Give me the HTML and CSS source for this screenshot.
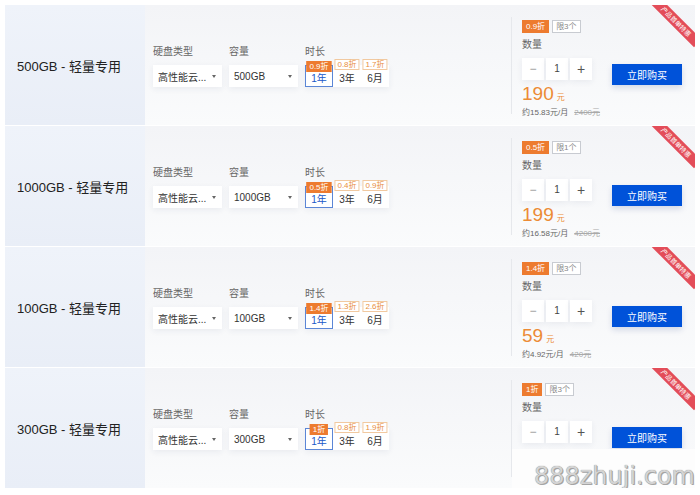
FILE: index.html
```html
<!DOCTYPE html>
<html lang="zh-CN">
<head>
    <meta charset="UTF-8">
    <meta name="viewport" content="width=device-width, initial-scale=1.0">
    <title>轻量专用云硬盘</title>
    <link rel="stylesheet" href="styles.css">
</head>
<body>
    <main class="list">

        <div class="item">
            <div class="name">500GB - 轻量专用</div>
            <div class="body">
                <div class="config">
                    <div class="field">
                        <div class="label">硬盘类型</div>
                        <div class="select"><span>高性能云...</span><i class="arrow"></i></div>
                    </div>
                    <div class="field">
                        <div class="label">容量</div>
                        <div class="select"><span>500GB</span><i class="arrow"></i></div>
                    </div>
                    <div class="field">
                        <div class="label">时长</div>
                        <div class="periods">
                            <div class="period active"><em class="off hot">0.9折</em>1年</div>
                            <div class="period"><em class="off">0.8折</em>3年</div>
                            <div class="period"><em class="off">1.7折</em>6月</div>
                        </div>
                    </div>
                </div>
                <div class="buy">
                    <div class="order">
                        <div class="tags"><span class="tag hot">0.9折</span><span class="tag limit">限3个</span></div>
                        <div class="label">数量</div>
                        <div class="stepper"><span class="minus">−</span><span>1</span><span class="plus">+</span></div>
                        <div class="price">190<small>元</small></div>
                        <div class="monthly">约15.83元/月<s>2400元</s></div>
                    </div>
                    <button class="buy-btn">立即购买</button>
                </div>
                <div class="ribbon">产品首单特惠</div>
            </div>
        </div>

        <div class="item">
            <div class="name">1000GB - 轻量专用</div>
            <div class="body">
                <div class="config">
                    <div class="field">
                        <div class="label">硬盘类型</div>
                        <div class="select"><span>高性能云...</span><i class="arrow"></i></div>
                    </div>
                    <div class="field">
                        <div class="label">容量</div>
                        <div class="select"><span>1000GB</span><i class="arrow"></i></div>
                    </div>
                    <div class="field">
                        <div class="label">时长</div>
                        <div class="periods">
                            <div class="period active"><em class="off hot">0.5折</em>1年</div>
                            <div class="period"><em class="off">0.4折</em>3年</div>
                            <div class="period"><em class="off">0.9折</em>6月</div>
                        </div>
                    </div>
                </div>
                <div class="buy">
                    <div class="order">
                        <div class="tags"><span class="tag hot">0.5折</span><span class="tag limit">限1个</span></div>
                        <div class="label">数量</div>
                        <div class="stepper"><span class="minus">−</span><span>1</span><span class="plus">+</span></div>
                        <div class="price">199<small>元</small></div>
                        <div class="monthly">约16.58元/月<s>4200元</s></div>
                    </div>
                    <button class="buy-btn">立即购买</button>
                </div>
                <div class="ribbon">产品首单特惠</div>
            </div>
        </div>

        <div class="item">
            <div class="name">100GB - 轻量专用</div>
            <div class="body">
                <div class="config">
                    <div class="field">
                        <div class="label">硬盘类型</div>
                        <div class="select"><span>高性能云...</span><i class="arrow"></i></div>
                    </div>
                    <div class="field">
                        <div class="label">容量</div>
                        <div class="select"><span>100GB</span><i class="arrow"></i></div>
                    </div>
                    <div class="field">
                        <div class="label">时长</div>
                        <div class="periods">
                            <div class="period active"><em class="off hot">1.4折</em>1年</div>
                            <div class="period"><em class="off">1.3折</em>3年</div>
                            <div class="period"><em class="off">2.6折</em>6月</div>
                        </div>
                    </div>
                </div>
                <div class="buy">
                    <div class="order">
                        <div class="tags"><span class="tag hot">1.4折</span><span class="tag limit">限3个</span></div>
                        <div class="label">数量</div>
                        <div class="stepper"><span class="minus">−</span><span>1</span><span class="plus">+</span></div>
                        <div class="price">59<small>元</small></div>
                        <div class="monthly">约4.92元/月<s>420元</s></div>
                    </div>
                    <button class="buy-btn">立即购买</button>
                </div>
                <div class="ribbon">产品首单特惠</div>
            </div>
        </div>

        <div class="item">
            <div class="name">300GB - 轻量专用</div>
            <div class="body">
                <div class="config">
                    <div class="field">
                        <div class="label">硬盘类型</div>
                        <div class="select"><span>高性能云...</span><i class="arrow"></i></div>
                    </div>
                    <div class="field">
                        <div class="label">容量</div>
                        <div class="select"><span>300GB</span><i class="arrow"></i></div>
                    </div>
                    <div class="field">
                        <div class="label">时长</div>
                        <div class="periods">
                            <div class="period active"><em class="off hot">1折</em>1年</div>
                            <div class="period"><em class="off">0.8折</em>3年</div>
                            <div class="period"><em class="off">1.9折</em>6月</div>
                        </div>
                    </div>
                </div>
                <div class="buy">
                    <div class="order">
                        <div class="tags"><span class="tag hot">1折</span><span class="tag limit">限3个</span></div>
                        <div class="label">数量</div>
                        <div class="stepper"><span class="minus">−</span><span>1</span><span class="plus">+</span></div>
                    </div>
                    <button class="buy-btn">立即购买</button>
                </div>
                <div class="ribbon">产品首单特惠</div>
            </div>
        </div>

        <div class="watermark">888zhuji.com</div>
    </main>
</body>
</html>
```

FILE: styles.css
```css
body {
    margin: 0;
    background: #fff;
    font-family: "Liberation Sans", "Noto Sans CJK SC", sans-serif;
    color: #333;
}

.list {
    position: relative;
    padding: 5px 5px 0;
    display: flex;
    flex-direction: column;
    gap: 1px;
}

.item {
    display: flex;
    height: 120px;
}

.name {
    width: 128px;
    padding-left: 12px;
    display: flex;
    align-items: center;
    font-size: 13px;
    color: #222;
    background: linear-gradient(#eff3fa, #e9eef7);
}

.body {
    position: relative;
    flex: 1;
    display: flex;
    align-items: center;
    padding-left: 8px;
    overflow: hidden;
    background: linear-gradient(#f3f4f7, #fafbfc);
}

.config {
    display: flex;
    gap: 7px;
    margin-top: 3px;
}

.field .label,
.order .label {
    font-size: 10px;
    line-height: 12px;
    color: #666;
    margin-bottom: 7px;
}

.select {
    width: 69px;
    height: 22px;
    box-sizing: border-box;
    padding: 0 6px 0 5px;
    display: flex;
    align-items: center;
    justify-content: space-between;
    background: #fff;
    font-size: 10px;
    color: #333;
    box-shadow: 0 2px 6px rgba(40, 60, 100, 0.07);
}

.arrow {
    width: 0;
    height: 0;
    border-left: 2.5px solid transparent;
    border-right: 2.5px solid transparent;
    border-top: 3px solid #666;
}

.periods {
    display: flex;
    background: #fff;
    box-shadow: 0 2px 6px rgba(40, 60, 100, 0.07);
}

.period {
    position: relative;
    width: 28px;
    height: 22px;
    box-sizing: border-box;
    display: flex;
    align-items: center;
    justify-content: center;
    padding-top: 2px;
    font-size: 10px;
    color: #333;
}

.period.active {
    border: 1px solid #5b86d6;
    color: #2057c7;
}

.off {
    position: absolute;
    top: -6px;
    left: 50%;
    transform: translateX(-50%);
    padding: 0 2px;
    font-style: normal;
    font-size: 8px;
    line-height: 9px;
    white-space: nowrap;
    color: #e8903f;
    background: #fff;
    border: 1px solid #f1c9a0;
}

.period.active .off {
    top: -5px;
}

.off.hot,
.tag.hot {
    color: #fff;
    background: #ed7b2f;
    border-color: #ed7b2f;
}

.buy {
    margin-left: auto;
    height: 97px;
    display: flex;
    border-left: 1px solid #e6e8ec;
    padding: 0 13px 0 10px;
}

.order {
    width: 70px;
    padding-top: 3px;
}

.tags {
    display: flex;
    gap: 3px;
    margin-bottom: 6px;
}

.tag {
    height: 13px;
    box-sizing: border-box;
    padding: 0 3px;
    font-size: 8px;
    line-height: 11px;
    border: 1px solid #c8cbd1;
    color: #888;
    background: #fff;
}

.stepper {
    display: flex;
    gap: 2px;
}

.stepper span {
    width: 22px;
    height: 22px;
    display: flex;
    align-items: center;
    justify-content: center;
    background: #fff;
    font-size: 10px;
    color: #444;
    box-shadow: 0 2px 6px rgba(40, 60, 100, 0.07);
}

.stepper .minus {
    color: #999;
    font-size: 12px;
}

.stepper .plus {
    font-size: 14px;
    color: #555;
}

.price {
    margin-top: 4px;
    font-size: 19px;
    line-height: 20px;
    color: #ec8b35;
}

.price small {
    font-size: 8px;
    margin-left: 3px;
}

.monthly {
    font-size: 8px;
    line-height: 10px;
    color: #666;
    white-space: nowrap;
}

.monthly s {
    margin-left: 6px;
    color: #aaa;
}

.buy-btn {
    align-self: center;
    margin: 19px 0 0 20px;
    width: 70px;
    height: 21px;
    padding: 0;
    border: none;
    background: #0052d9;
    color: #fff;
    font-family: inherit;
    font-size: 10px;
    box-shadow: 0 3px 6px rgba(0, 40, 120, 0.15);
}

.ribbon {
    position: absolute;
    top: 11px;
    right: -12px;
    width: 62px;
    height: 11px;
    transform: rotate(45deg);
    background: #e34d59;
    color: #fff;
    font-size: 6.5px;
    line-height: 11px;
    text-align: center;
    white-space: nowrap;
}

.watermark {
    position: absolute;
    left: 512px;
    top: 449px;
    width: 183px;
    height: 41px;
    box-sizing: border-box;
    padding: 14px 0 0 0;
    text-align: right;
    background: #fdfdfd;
    font-family: "DejaVu Sans", sans-serif;
    font-size: 24px;
    line-height: 26px;
    color: #d4d4d4;
    text-shadow: 0 0 1px #777, 1px 1px 0 #aaa;
}
```
